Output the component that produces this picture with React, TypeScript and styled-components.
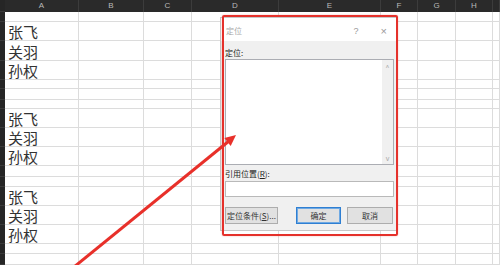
import React from "react";
import styled, { createGlobalStyle } from "styled-components";

const GlobalStyle = createGlobalStyle`
  html, body {
    margin: 0;
    padding: 0;
    background: #ffffff;
  }
  * {
    box-sizing: border-box;
  }
`;

const COLS = [5, 74, 65, 48, 87, 102, 37, 38, 37, 7];
const LETTERS = ["", "A", "B", "C", "D", "E", "F", "G", "H", ""];
const ROWS = [10, 19, 20, 19, 9, 11, 9, 19, 19, 19, 11, 10, 19, 19, 19, 10, 11];
const NAMES: Record<number, string> = {
  1: "张飞",
  2: "关羽",
  3: "孙权",
  7: "张飞",
  8: "关羽",
  9: "孙权",
  12: "张飞",
  13: "关羽",
  14: "孙权",
};

const Screen = styled.div`
  position: relative;
  width: 500px;
  height: 265px;
  overflow: hidden;
  font-family: "Noto Sans CJK SC", "Noto Sans", sans-serif;
`;

const Sheet = styled.div`
  display: grid;
  grid-template-columns: ${COLS.map((c) => c + "px").join(" ")};
  grid-template-rows: 12px ${ROWS.map((r) => r + "px").join(" ")};
`;

const ColHead = styled.div`
  background: #2a2a2a;
  color: #b9b9b9;
  font-family: "Liberation Sans", sans-serif;
  font-size: 8px;
  line-height: 12px;
  text-align: center;
  border-right: 1px solid #3c3c3c;
`;

const RowHead = styled.div`
  background: #262626;
  border-bottom: 1px solid #3a3a3a;
`;

const Cell = styled.div`
  border-right: 1px solid #dcdcdc;
  border-bottom: 1px solid #dcdcdc;
  background: #fff;
  white-space: nowrap;
  display: flex;
  align-items: center;
  font-size: 15px;
  line-height: 15px;
  color: #333;
  padding: 1px 0 0 3px;
`;

const Frame = styled.div`
  position: absolute;
  left: 222px;
  top: 15px;
  width: 176px;
  height: 221px;
  border: 2px solid #e5312b;
  border-radius: 2px;
  box-shadow: 0 0 2px rgba(229, 49, 43, 0.35);
  pointer-events: none;
`;

const Dialog = styled.div`
  position: absolute;
  left: 220px;
  top: 17px;
  width: 177px;
  height: 214px;
  background: #f0f0f0;
  border: 1px solid #c8c8c8;
  display: flex;
  flex-direction: column;
  font-size: 8px;
  color: #333;
`;

const TitleBar = styled.div`
  height: 23px;
  background: #fff;
  display: flex;
  align-items: center;
  padding: 2px 9px 0 5px;
  color: #a8a8a8;
`;

const Title = styled.span`
  flex: 1;
`;

const TitleBtn = styled.span<{ $gap?: number }>`
  font-family: "Liberation Sans", sans-serif;
  font-size: ${(p) => (p.$gap ? 11 : 9)}px;
  color: #9a9a9a;
  margin-left: ${(p) => p.$gap || 0}px;
`;

const Body = styled.div`
  flex: 1;
  display: flex;
  flex-direction: column;
  padding: 4px 2px 0 4px;
`;

const Label = styled.div<{ $h: number }>`
  height: ${(p) => p.$h}px;
  display: flex;
  align-items: center;
  color: #222;
  padding-top: 1px;
`;

const ListBox = styled.div`
  height: 106px;
  background: #fff;
  border: 1px solid #abadb3;
  display: flex;
  justify-content: flex-end;
`;

const ScrollBar = styled.div`
  width: 11px;
  background: #f0f0f0;
  display: flex;
  flex-direction: column;
  justify-content: space-between;
  align-items: center;
  padding: 3px 0 2px;
  color: #a6a6a6;
  font-size: 7px;
  line-height: 8px;
`;

const TextBox = styled.div`
  height: 16px;
  background: #fff;
  border: 1px solid #b9b9b9;
`;

const ButtonRow = styled.div`
  display: flex;
  margin-top: 10px;
  padding-right: 1px;
`;

const Button = styled.div<{ $w: number; $primary?: boolean }>`
  width: ${(p) => p.$w}px;
  height: 17px;
  background: #e1e1e1;
  border: 1px solid ${(p) => (p.$primary ? "#2f7fd2" : "#adadad")};
  box-shadow: ${(p) => (p.$primary ? "inset 0 0 0 1px #6fa9e3" : "none")};
  display: flex;
  align-items: center;
  justify-content: center;
  color: #333;
  font-size: 8px;
`;

const Spacer = styled.div`
  flex: 1;
`;

const ButtonGap = styled.div`
  width: 6px;
`;

const Arrow = styled.svg`
  position: absolute;
  left: 0;
  top: 0;
  pointer-events: none;
`;

export default function App() {
  return (
    <Screen>
      <GlobalStyle />
      <Sheet>
        {LETTERS.map((l, i) =>
          i === 0 ? <RowHead key={"h" + i} /> : <ColHead key={"h" + i}>{l}</ColHead>
        )}
        {ROWS.map((_, r) =>
          COLS.map((__, c) =>
            c === 0 ? (
              <RowHead key={r + "-" + c} />
            ) : (
              <Cell key={r + "-" + c}>{c === 1 ? NAMES[r] || "" : ""}</Cell>
            )
          )
        )}
      </Sheet>

      <Dialog>
        <TitleBar>
          <Title>定位</Title>
          <TitleBtn>?</TitleBtn>
          <TitleBtn $gap={22}>×</TitleBtn>
        </TitleBar>
        <Body>
          <Label $h={14}>定位:</Label>
          <ListBox>
            <ScrollBar>
              <span>^</span>
              <span>v</span>
            </ScrollBar>
          </ListBox>
          <Label $h={16}>引用位置(<u>R</u>):</Label>
          <TextBox />
          <ButtonRow>
            <Button $w={53}>
              定位条件(<u>S</u>)...
            </Button>
            <Spacer />
            <Button $w={45} $primary>
              确定
            </Button>
            <ButtonGap />
            <Button $w={46}>取消</Button>
          </ButtonRow>
        </Body>
      </Dialog>
      <Frame />

      <Arrow width={500} height={265} viewBox="0 0 500 265">
        <line x1={74} y1={267} x2={229} y2={141} stroke="#e8302a" strokeWidth={3} />
        <polygon points="236,135 230.7,146 224.3,138" fill="#e8302a" />
      </Arrow>
    </Screen>
  );
}
